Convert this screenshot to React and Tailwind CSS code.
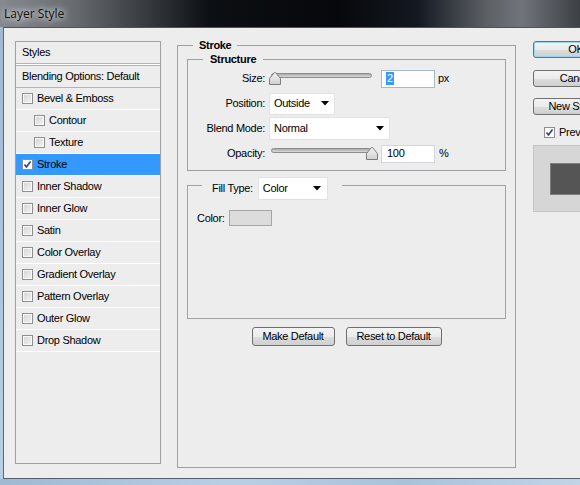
import React from 'react'

function Check({ checked }) {
  return (
    <span className={`w-[11px] h-[11px] shrink-0 border border-[#8e8f8f] flex items-center justify-center ${checked ? 'bg-white' : 'bg-[linear-gradient(135deg,#d4d4d4,#f4f4f4)] shadow-[inset_0_0_0_1px_#f8f8f8]'}`}>
      {checked && (
        <svg width="9" height="9" viewBox="0 0 9 9">
          <path d="M1.5 4.5 L3.5 7 L7.5 1.5" stroke="#2b3f8c" strokeWidth="1.6" fill="none" />
        </svg>
      )}
    </span>
  )
}

function Arrow() {
  return (
    <svg width="8" height="5" viewBox="0 0 8 5" className="shrink-0">
      <path d="M0 0 H8 L4 4.5 Z" fill="#000" />
    </svg>
  )
}

function Thumb() {
  return (
    <svg width="12" height="13" viewBox="0 0 12 13">
      <defs>
        <linearGradient id="tg" x1="0" y1="0" x2="0" y2="1">
          <stop offset="0" stopColor="#f4f4f4" />
          <stop offset="1" stopColor="#cfcfcf" />
        </linearGradient>
      </defs>
      <path d="M5.5 0.5 Q6 0.2 6.5 0.5 L11.5 6.5 V12.5 H0.5 V6.5 Z" fill="url(#tg)" stroke="#7c7c7c" />
    </svg>
  )
}

function Slider({ pos }) {
  return (
    <div className="relative w-[104px] h-[13px] shrink-0">
      <div className="absolute left-[2px] top-[1px] w-[101px] h-[5px] rounded-full border border-[#8d8d8d] bg-[linear-gradient(#a9a9a9,#dadada)]" />
      <div className={`absolute top-0 ${pos === 'right' ? 'left-[97px]' : 'left-0'}`}>
        <Thumb />
      </div>
    </div>
  )
}

const rows = [
  { label: 'Bevel & Emboss' },
  { label: 'Contour', indent: true },
  { label: 'Texture', indent: true },
  { label: 'Stroke', checked: true, active: true },
  { label: 'Inner Shadow' },
  { label: 'Inner Glow' },
  { label: 'Satin' },
  { label: 'Color Overlay' },
  { label: 'Gradient Overlay' },
  { label: 'Pattern Overlay' },
  { label: 'Outer Glow' },
  { label: 'Drop Shadow' },
]

function Button({ children, className = '' }) {
  return (
    <div className={`shrink-0 flex items-center justify-center rounded-[3px] border border-[#707070] bg-[linear-gradient(#f3f3f3_0%,#ebebeb_50%,#dddddd_51%,#cfcfcf_100%)] ${className}`}>
      {children}
    </div>
  )
}

export default function App() {
  return (
    <div className="w-[580px] h-[485px] overflow-hidden flex flex-col font-['Liberation_Sans',Arial,sans-serif] text-[11px] tracking-[-0.3px] text-black">
      {/* title bar */}
      <div className="h-[27px] shrink-0 flex items-center pl-[4px] bg-[linear-gradient(to_right,#868a8f_0%,#6a6e73_12%,#2c3035_28%,#0c0f13_36%,#06080b_58%,#141820_72%,#5d6166_84%,#70747a_90%,#3c4045_100%)]">
        <span className="font-['Open_Sans',sans-serif] text-[12px] tracking-normal text-[#111] [text-shadow:0_0_6px_#ffffff,0_0_10px_#ffffffaa]">Layer Style</span>
      </div>

      {/* window body */}
      <div className="flex-1 flex bg-[linear-gradient(#9fb9d3,#b9cfe4)]">
        <div className="w-[3px] shrink-0" />
        <div className="flex-1 flex bg-[#ededed] border-l border-t border-b border-l-[#5a6877] border-t-[#4b535c] border-b-[#55606c] pt-[13px] pl-[11px]">
          {/* styles list */}
          <div className="w-[146px] h-[423px] shrink-0 border border-[#a0a0a0] flex flex-col">
            <div className="h-[21px] flex items-center pl-[6px]">Styles</div>
            <div className="h-[3px] border-t border-b border-[#b4b4b4] bg-white" />
            <div className="h-[21px] flex items-center pl-[6px]">Blending Options: Default</div>
            <div className="h-px bg-[#b4b4b4]" />
            {rows.map((r) => (
              <div key={r.label} className="flex flex-col">
                <div className={`h-[21px] flex items-center gap-[4px] ${r.indent ? 'pl-[18px]' : 'pl-[6px]'} ${r.active ? 'bg-[#3399ff]' : ''}`}>
                  <Check checked={r.checked} />
                  <span>{r.label}</span>
                </div>
                <div className="h-px bg-white" />
              </div>
            ))}
          </div>

          {/* main panel */}
          <fieldset className="ml-[16px] -mt-[3px] w-[339px] h-[430px] shrink-0 border border-[#a0a0a0] px-[9px]">
            <legend className="ml-[6px] px-[6px] font-bold leading-[14px]">Stroke</legend>

            <fieldset className="border border-[#a0a0a0] pb-[4px]">
              <legend className="ml-[15px] px-[7px] font-bold leading-[14px]">Structure</legend>

              <div className="h-[25px] flex items-center">
                <span className="w-[77px] text-right mr-[4px]">Size:</span>
                <Slider pos="left" />
                <div className="ml-[8px] w-[54px] h-[18px] bg-white border border-[#a5b8d0] flex items-center pl-[4px]">
                  <span className="bg-[#3399ff] text-white px-[1px] leading-[13px]">2</span>
                </div>
                <span className="ml-[3px]">px</span>
              </div>

              <div className="h-[25px] flex items-center">
                <span className="w-[77px] text-right mr-[4px]">Position:</span>
                <div className="w-[66px] h-[22px] bg-white border border-[#e2e2e2] flex items-center justify-between pl-[4px] pr-[5px]">
                  <span>Outside</span>
                  <Arrow />
                </div>
              </div>

              <div className="h-[25px] flex items-center">
                <span className="w-[77px] text-right mr-[4px]">Blend Mode:</span>
                <div className="w-[121px] h-[23px] bg-white border border-[#e2e2e2] flex items-center justify-between pl-[4px] pr-[5px]">
                  <span>Normal</span>
                  <Arrow />
                </div>
              </div>

              <div className="h-[25px] flex items-center">
                <span className="w-[77px] text-right mr-[4px]">Opacity:</span>
                <Slider pos="right" />
                <div className="ml-[8px] w-[54px] h-[18px] bg-white border border-[#d3d7dd] flex items-center pl-[5px]">
                  100
                </div>
                <span className="ml-[4px]">%</span>
              </div>
            </fieldset>

            <fieldset className="-mt-[1px] h-[149px] border border-[#a0a0a0] pl-[9px] pt-[10px]">
              <legend className="ml-[5px] pl-[10px] pr-[14px] pt-[7px] flex items-center gap-[5px]">
                <span>Fill Type:</span>
                <div className="w-[70px] h-[23px] bg-white border border-[#e2e2e2] flex items-center justify-between pl-[4px] pr-[6px]">
                  <span>Color</span>
                  <Arrow />
                </div>
              </legend>
              <div className="flex items-center gap-[4px]">
                <span>Color:</span>
                <div className="w-[43px] h-[16px] bg-[#dcdcdc] border border-[#a6a6a6]" />
              </div>
            </fieldset>

            <div className="mt-[8px] flex justify-center gap-[11px]">
              <Button className="w-[83px] h-[19px]">Make Default</Button>
              <Button className="w-[96px] h-[19px]">Reset to Default</Button>
            </div>
          </fieldset>

          {/* right column */}
          <div className="ml-[17px] w-[90px] shrink-0 flex flex-col">
            <Button className="w-[86px] h-[17px] border-[#3c7fb1] shadow-[inset_0_0_0_1px_#9ed5f3]">OK</Button>
            <Button className="w-[86px] h-[17px] mt-[12px]">Cancel</Button>
            <Button className="w-[86px] h-[17px] mt-[11px]">New Style...</Button>
            <div className="mt-[10px] h-[14px] flex items-center gap-[4px] pl-[11px]">
              <Check checked />
              <span>Preview</span>
            </div>
            <div className="mt-[6px] w-[80px] h-[67px] bg-[#d6d6d6] border border-[#c4c4c4] pt-[17px] pl-[16px]">
              <div className="w-[40px] h-[32px] bg-[#555555] border border-[#7e7e7e]" />
            </div>
          </div>
        </div>
      </div>
      <div className="h-[6px] shrink-0 bg-[linear-gradient(to_right,#9fb9d3,#b9cfe4_40%,#a9c2da_70%,#c2d5e7)]" />
    </div>
  )
}
